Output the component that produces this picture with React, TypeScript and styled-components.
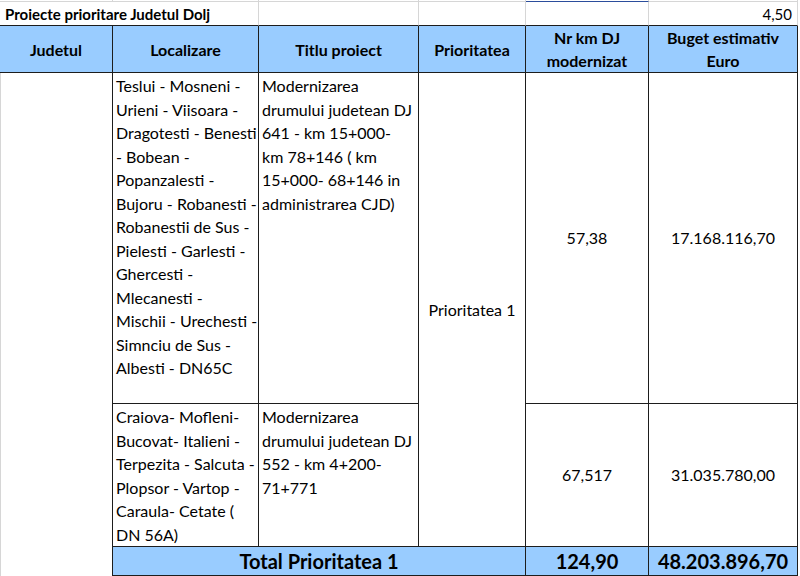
import React from "react";
import styled, { createGlobalStyle } from "styled-components";

const GlobalStyle = createGlobalStyle`
  html, body { margin: 0; padding: 0; background: #ffffff; }
  body { font-family: Lato, "Open Sans", sans-serif; color: #000; }
`;

const DARK = "#1d1d1d";
const GRID = "#d6d6d6";
const BLUE = "#99ccff";

const Sheet = styled.table`
  border-collapse: separate;
  border-spacing: 0;
  table-layout: fixed;
  width: 798px;
  font-size: 16px;
  line-height: 23.5px;
`;

const Col = styled.col<{ $w: number }>`
  width: ${(p) => p.$w}px;
`;

const Row = styled.tr<{ $h: number }>`
  height: ${(p) => p.$h}px;
`;

const Cell = styled.td<{
  $align?: "left" | "center" | "right";
  $valign?: "top" | "middle";
  $right?: string;
  $bottom?: string;
  $left?: string;
}>`
  box-sizing: border-box;
  padding: 0 3px;
  text-align: ${(p) => p.$align ?? "left"};
  vertical-align: ${(p) => p.$valign ?? "middle"};
  border-right: 1px solid ${(p) => p.$right ?? DARK};
  border-bottom: ${(p) => (p.$bottom ? `1px solid ${p.$bottom}` : "none")};
  border-left: ${(p) => (p.$left ? `1px solid ${p.$left}` : "none")};
  white-space: nowrap;
  overflow: visible;
`;

const GridCell = styled(Cell)`
  padding: 0 5px;
  line-height: 22px;
  font-size: 15px;
`;

const TitleText = styled.span`
  font-weight: 700;
  font-size: 15px;
`;

const HeadCell = styled(Cell)`
  background: ${BLUE};
  font-weight: 700;
  text-align: center;
  line-height: 23px;
`;

const BodyCell = styled(Cell)``;

const TextBlock = styled.div`
  padding-top: 1px;
`;

const Line = styled.div`
  white-space: nowrap;
`;

const TotalCell = styled(Cell)`
  background: ${BLUE};
  font-weight: 700;
  font-size: 20px;
  text-align: center;
  line-height: 27px;
`;

const Lines = ({ items }: { items: string[] }) => (
  <TextBlock>
    {items.map((t, i) => (
      <Line key={i}>{t}</Line>
    ))}
  </TextBlock>
);

const loc1 = [
  "Teslui - Mosneni -",
  "Urieni - Viisoara -",
  "Dragotesti - Benesti",
  "- Bobean -",
  "Popanzalesti -",
  "Bujoru - Robanesti -",
  "Robanestii de Sus -",
  "Pielesti - Garlesti -",
  "Ghercesti -",
  "Mlecanesti -",
  "Mischii - Urechesti -",
  "Simnciu de Sus -",
  "Albesti - DN65C",
];

const tit1 = [
  "Modernizarea",
  "drumului judetean DJ",
  "641 - km 15+000-",
  "km 78+146 ( km",
  "15+000- 68+146 in",
  "administrarea CJD)",
];

const loc2 = [
  "Craiova- Mofleni-",
  "Bucovat- Italieni -",
  "Terpezita - Salcuta -",
  "Plopsor - Vartop -",
  "Caraula- Cetate (",
  "DN 56A)",
];

const tit2 = ["Modernizarea", "drumului judetean DJ", "552 - km 4+200-", "71+771"];

export default function App() {
  return (
    <>
      <GlobalStyle />
      <Sheet>
        <colgroup>
          <Col $w={113} />
          <Col $w={146} />
          <Col $w={160} />
          <Col $w={107} />
          <Col $w={123} />
          <Col $w={149} />
        </colgroup>
        <tbody>
          <Row $h={2}>
            <GridCell $right={GRID} $bottom={GRID} />
            <GridCell $right={GRID} $bottom={GRID} />
            <GridCell $right={GRID} $bottom={GRID} />
            <GridCell $right={GRID} $bottom={GRID} />
            <GridCell $right={GRID} $bottom="#2b4d9c" />
            <GridCell $right={GRID} $bottom={GRID} />
          </Row>
          <Row $h={24}>
            <GridCell colSpan={2} $right={GRID} $bottom={DARK}>
              <TitleText>Proiecte prioritare Judetul Dolj</TitleText>
            </GridCell>
            <GridCell $right={GRID} $bottom={DARK} />
            <GridCell $right={GRID} $bottom={DARK} />
            <GridCell $right={GRID} $bottom={DARK} />
            <GridCell $align="right" $right={GRID} $bottom={DARK}>
              4,50
            </GridCell>
          </Row>
          <Row $h={47}>
            <HeadCell $bottom={DARK}>Judetul</HeadCell>
            <HeadCell $bottom={DARK}>Localizare</HeadCell>
            <HeadCell $bottom={DARK}>Titlu proiect</HeadCell>
            <HeadCell $bottom={DARK}>Prioritatea</HeadCell>
            <HeadCell $bottom={DARK}>
              Nr km DJ
              <br />
              modernizat
            </HeadCell>
            <HeadCell $bottom={DARK}>
              Buget estimativ
              <br />
              Euro
            </HeadCell>
          </Row>
          <Row $h={331}>
            <BodyCell rowSpan={4} $left={GRID} />
            <BodyCell $valign="top" $bottom={DARK}>
              <Lines items={loc1} />
            </BodyCell>
            <BodyCell $valign="top" $bottom={DARK}>
              <Lines items={tit1} />
            </BodyCell>
            <BodyCell rowSpan={2} $align="center" $bottom={DARK}>
              Prioritatea 1
            </BodyCell>
            <BodyCell $align="center" $bottom={DARK}>
              57,38
            </BodyCell>
            <BodyCell $align="center" $bottom={DARK}>
              17.168.116,70
            </BodyCell>
          </Row>
          <Row $h={141}>
            <BodyCell $valign="top" $bottom={DARK}>
              <Lines items={loc2} />
            </BodyCell>
            <BodyCell $valign="top" $bottom={DARK}>
              <Lines items={tit2} />
            </BodyCell>
            <BodyCell $align="center" $bottom={DARK}>
              67,517
            </BodyCell>
            <BodyCell $align="center" $bottom={DARK}>
              31.035.780,00
            </BodyCell>
          </Row>
          <Row $h={29}>
            <TotalCell colSpan={3} $bottom={DARK}>
              Total Prioritatea 1
            </TotalCell>
            <TotalCell $bottom={DARK}>124,90</TotalCell>
            <TotalCell $bottom={DARK}>48.203.896,70</TotalCell>
          </Row>
          <Row $h={30}>
            <BodyCell />
            <BodyCell />
            <BodyCell />
            <BodyCell />
            <BodyCell />
          </Row>
        </tbody>
      </Sheet>
    </>
  );
}
